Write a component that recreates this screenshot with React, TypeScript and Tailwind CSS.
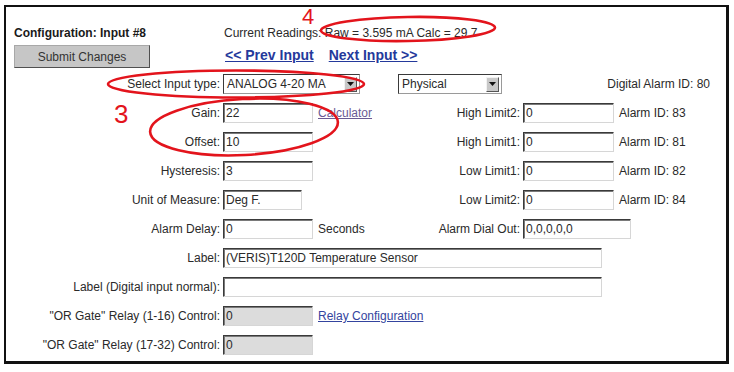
import React from "react";

const font = { fontFamily: '"Liberation Sans", Arial, sans-serif' };

function TextBox({ value, className = "", gray = false }: { value: string; className?: string; gray?: boolean }) {
  return (
    <div
      className={`flex h-[20px] items-center border border-t-[#3a3a3a] border-l-[#3a3a3a] border-r-[#d6d6d6] border-b-[#d6d6d6] pl-[2px] text-[12px] text-[#2a2a2a] shadow-[inset_1px_1px_0_#7a7a7a] ${
        gray ? "bg-[#dcdcdc]" : "bg-white"
      } ${className}`}
    >
      {value}
    </div>
  );
}

function SelectBox({ value, className = "" }: { value: string; className?: string }) {
  return (
    <div
      className={`flex h-[20px] items-center justify-between border border-t-[#3a3a3a] border-l-[#3a3a3a] border-r-[#9a9a9a] border-b-[#9a9a9a] bg-white pl-[3px] pr-[2px] text-[12px] text-[#2a2a2a] ${className}`}
    >
      <span>{value}</span>
      <span className="flex h-[15px] w-[13px] items-center justify-center border border-t-[#f2f2f2] border-l-[#f2f2f2] border-r-[#555] border-b-[#555] bg-[#c8c8c8]">
        <svg width="7" height="4" viewBox="0 0 7 4">
          <path d="M0 0h7L3.5 4z" fill="#111" />
        </svg>
      </span>
    </div>
  );
}

function Label({ children }: { children: React.ReactNode }) {
  return <div className="w-[217px] shrink-0 pr-[3px] text-right">{children}</div>;
}

interface PairRow {
  label: string;
  value: string;
  inputW: string;
  extra?: React.ReactNode;
  rLabel?: string;
  rValue?: string;
  rInputW?: string;
  rNote?: string;
}

const rows: PairRow[] = [
  {
    label: "Gain:",
    value: "22",
    inputW: "w-[90px]",
    extra: <span className="text-[#6a5a94] underline">Calculator</span>,
    rLabel: "High Limit2:",
    rValue: "0",
    rInputW: "w-[91px]",
    rNote: "Alarm ID: 83",
  },
  { label: "Offset:", value: "10", inputW: "w-[90px]", rLabel: "High Limit1:", rValue: "0", rInputW: "w-[91px]", rNote: "Alarm ID: 81" },
  { label: "Hysteresis:", value: "3", inputW: "w-[90px]", rLabel: "Low Limit1:", rValue: "0", rInputW: "w-[91px]", rNote: "Alarm ID: 82" },
  { label: "Unit of Measure:", value: "Deg F.", inputW: "w-[79px]", rLabel: "Low Limit2:", rValue: "0", rInputW: "w-[91px]", rNote: "Alarm ID: 84" },
  {
    label: "Alarm Delay:",
    value: "0",
    inputW: "w-[90px]",
    extra: <span>Seconds</span>,
    rLabel: "Alarm Dial Out:",
    rValue: "0,0,0,0,0",
    rInputW: "w-[108px]",
  },
];

export default function App() {
  return (
    <div className="relative h-[372px] w-[734px] overflow-hidden bg-white text-[12px] leading-[14px] text-[#2a2a2a]" style={font}>
      <div className="ml-[4px] mt-[5px] h-[359px] w-[725px] border-2 border-r-[3px] border-b-[3px] border-[#111] pt-[19px]">
        {/* header */}
        <div className="flex h-[14px]">
          <div className="w-[218px] shrink-0 pl-[8px] font-bold text-[#1a1a1a]">Configuration: Input #8</div>
          <div>Current Readings: Raw = 3.595 mA Calc = 29.7</div>
        </div>
        <div className="mt-[5px] flex items-start">
          <div className="w-[219px] shrink-0 pl-[8px]">
            <div className="flex h-[23px] w-[136px] items-center justify-center border border-[#a8a8a8] border-b-[#505050] border-r-[#505050] bg-[#c6c6c6] text-[#333]">
              Submit Changes
            </div>
          </div>
          <div className="mt-[2px] flex gap-[15px] text-[14px] leading-[16px] font-bold text-[#24399b]">
            <span className="underline">&lt;&lt; Prev Input</span>
            <span className="underline">Next Input &gt;&gt;</span>
          </div>
        </div>

        {/* input type */}
        <div className="mt-[6px] flex items-center">
          <Label>Select Input type:</Label>
          <SelectBox value="ANALOG 4-20 MA" className="w-[137px]" />
          <SelectBox value="Physical" className="ml-[38px] w-[104px]" />
          <div className="ml-auto mr-[16px]">Digital Alarm ID: 80</div>
        </div>

        {rows.map((r) => (
          <div key={r.label} className="mt-[9px] flex h-[20px] items-center">
            <Label>{r.label}</Label>
            <div className="flex w-[157px] shrink-0 items-center">
              <TextBox value={r.value} className={r.inputW} />
              {r.extra && <div className="ml-[5px]">{r.extra}</div>}
            </div>
            <div className="w-[143px] shrink-0 pr-[3px] text-right">{r.rLabel}</div>
            {r.rValue !== undefined && <TextBox value={r.rValue} className={r.rInputW} />}
            {r.rNote && <div className="ml-[5px]">{r.rNote}</div>}
          </div>
        ))}

        <div className="mt-[9px] flex h-[20px] items-center">
          <Label>Label:</Label>
          <TextBox value="(VERIS)T120D Temperature Sensor" className="w-[379px]" />
        </div>
        <div className="mt-[9px] flex h-[20px] items-center">
          <Label>Label (Digital input normal):</Label>
          <TextBox value="" className="w-[379px]" />
        </div>
        <div className="mt-[9px] flex h-[20px] items-center">
          <Label>"OR Gate" Relay (1-16) Control:</Label>
          <TextBox value="0" gray className="w-[90px]" />
          <span className="ml-[5px] text-[#34449e] underline">Relay Configuration</span>
        </div>
        <div className="mt-[9px] flex h-[20px] items-center">
          <Label>"OR Gate" Relay (17-32) Control:</Label>
          <TextBox value="0" gray className="w-[90px]" />
        </div>
      </div>

      {/* red hand annotations */}
      <svg className="pointer-events-none absolute left-0 top-0" width="734" height="372" viewBox="0 0 734 372">
        <g fill="none" stroke="#e3141c" strokeWidth="2.6">
          <ellipse cx="408" cy="29" rx="87" ry="12" transform="rotate(-1 408 29)" />
          <ellipse cx="236" cy="84" rx="128" ry="13.5" />
          <ellipse cx="244" cy="127" rx="94" ry="28" transform="rotate(-3 244 127)" />
        </g>
        <text x="302" y="24" fill="#e3141c" fontSize="22" fontFamily="Liberation Sans, Arial, sans-serif">4</text>
        <text x="114" y="123" fill="#e3141c" fontSize="26" fontFamily="Liberation Sans, Arial, sans-serif">3</text>
      </svg>
    </div>
  );
}
